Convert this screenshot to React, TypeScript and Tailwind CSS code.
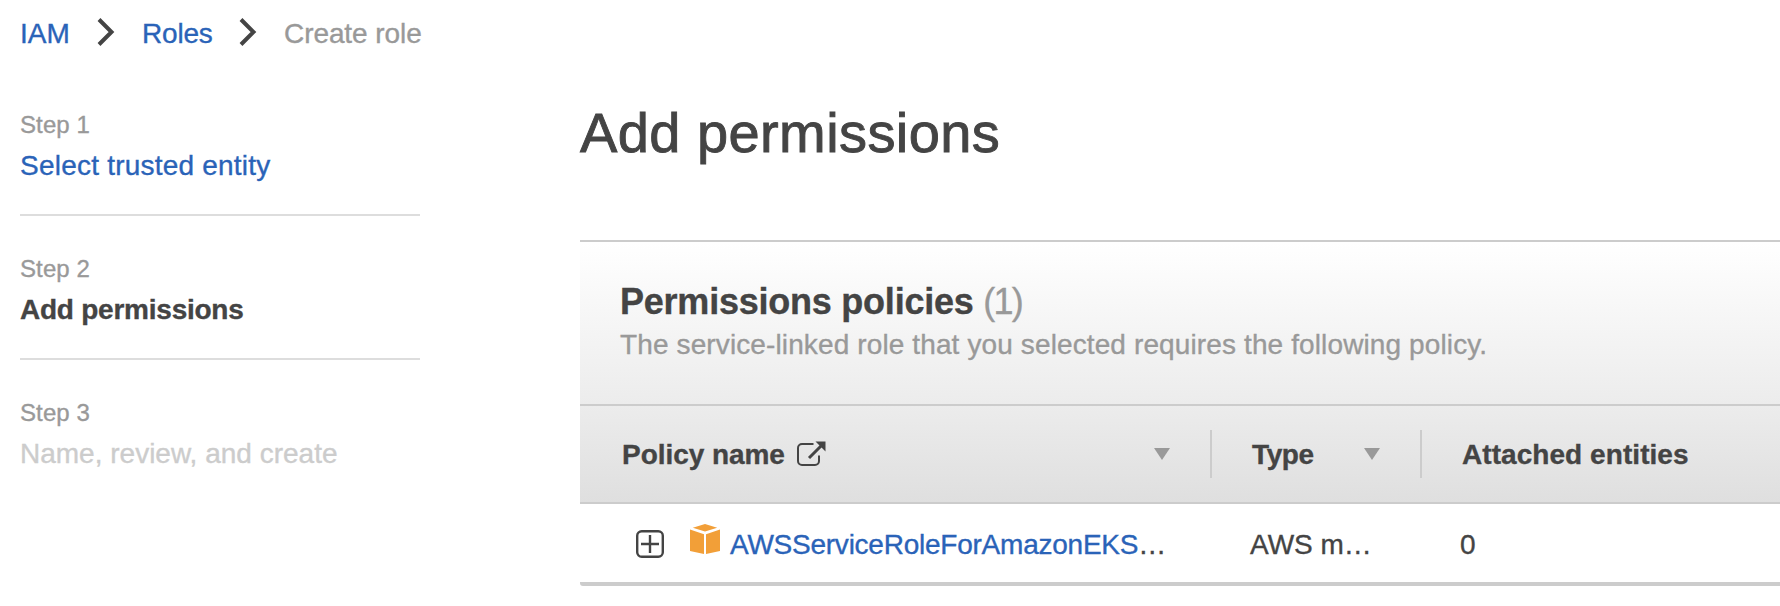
import React from "react";

const steps = [
  { step: "Step 1", label: "Select trusted entity", cls: "text-[#2a63b8] tracking-[0.22px]" },
  { step: "Step 2", label: "Add permissions", cls: "text-[#444] font-bold tracking-[-0.24px]" },
  { step: "Step 3", label: "Name, review, and create", cls: "text-[#ccc]" },
];

function Chevron() {
  return (
    <svg className="shrink-0" width="18" height="30" viewBox="0 0 18 30" fill="none" stroke="#444" strokeWidth="4">
      <path d="M2 2.5L14.5 15L2 27.5" />
    </svg>
  );
}

function SortArrow() {
  return (
    <svg className="shrink-0" width="16" height="12" viewBox="0 0 16 12" fill="#999">
      <path d="M0 0h16L8 12z" />
    </svg>
  );
}

function ExternalIcon() {
  return (
    <svg className="ml-[12px] shrink-0" width="29" height="26" viewBox="0 0 29 26" fill="none" stroke="#444" strokeWidth="2">
      <path d="M16.5 3H5a4 4 0 0 0-4 4v13a4 4 0 0 0 4 4h13a4 4 0 0 0 4-4v-5.5" />
      <path d="M12 17L25 4" strokeWidth="3" />
      <path d="M18.5 0.5H28.5V10.5z" fill="#444" stroke="none" />
    </svg>
  );
}

function ExpandIcon() {
  return (
    <svg className="mt-[2px] shrink-0" width="28" height="28" viewBox="0 0 28 28" fill="none" stroke="#444" strokeWidth="2.4">
      <rect x="1.2" y="1.2" width="25.6" height="25.6" rx="4.5" />
      <path d="M5 14h18M14 5v18" />
    </svg>
  );
}

function CubeIcon() {
  return (
    <svg className="mb-2 shrink-0" width="30" height="30" viewBox="0 0 30 30" fill="#f29f38">
      <path d="M2.8 3.8L15 0L27.2 3.8L15 7.6z" />
      <path d="M0 5.6L14 10.2V30L0 27z" />
      <path d="M30 5.6L16 10.2V30L30 27z" />
    </svg>
  );
}

export default function App() {
  return (
    <div className="h-[606px] w-[1780px] overflow-hidden bg-white font-['Liberation_Sans',Arial,sans-serif] text-[28px] leading-[40px] text-[#444] [-webkit-text-stroke:0.35px]">
      <nav className="flex h-[64px] items-center pl-5">
        <span className="w-[77px] pt-[3px] text-[#2a63b8]">IAM</span>
        <Chevron />
        <span className="ml-[27px] w-[97px] pt-[3px] tracking-[-0.2px] text-[#2a63b8]">Roles</span>
        <Chevron />
        <span className="ml-[27px] pt-[3px] tracking-[-0.08px] text-[#999]">Create role</span>
      </nav>
      <div className="flex">
        <aside className="ml-5 w-[400px] shrink-0 pt-[41px]">
          {steps.map((s, i) => (
            <div key={s.step} className={i < 2 ? "mb-[33px] h-[111px] border-b-2 border-[#ddd]" : ""}>
              <div className="text-[24px] tracking-[0.1px] text-[#999]">{s.step}</div>
              <div className={`mt-px ${s.cls}`}>{s.label}</div>
            </div>
          ))}
        </aside>
        <main className="ml-[160px] min-w-0 flex-1">
          <h1 className="h-[176px] pt-[39px] text-[56px] leading-[60px] tracking-[0.42px] [-webkit-text-stroke:0.9px]">
            Add permissions
          </h1>
          <section className="h-[166px] border-y-2 border-[#ccc] bg-linear-to-b from-white to-[#ececec] pt-10 pl-10">
            <h2 className="text-[36px] font-bold tracking-[-0.23px]">
              Permissions policies{" "}
              <span className="font-normal tracking-[-1.8px] text-[#999]">(1)</span>
            </h2>
            <p className="mt-[3px] whitespace-nowrap tracking-[0.12px] text-[#999]">
              The service-linked role that you selected requires the following policy.
            </p>
          </section>
          <div className="flex h-[98px] items-center border-b-2 border-[#ccc] bg-linear-to-b from-[#ececec] to-[#dfdfdf] font-bold">
            <div className="flex h-12 w-[632px] shrink-0 items-center border-r-2 border-[#ccc] pr-10 pl-[42px]">
              <span className="pt-[2px] tracking-[-0.05px]">Policy name</span>
              <ExternalIcon />
              <span className="ml-auto flex">
                <SortArrow />
              </span>
            </div>
            <div className="flex h-12 w-[210px] shrink-0 items-center justify-between border-r-2 border-[#ccc] px-10">
              <span className="pt-[2px] tracking-[-0.4px]">Type</span>
              <SortArrow />
            </div>
            <div className="pt-[2px] pl-10 tracking-[0.06px]">Attached entities</div>
          </div>
          <div className="flex h-[82px] items-center rounded-bl-[3px] border-b-4 border-[#ccc]">
            <div className="flex w-[670px] shrink-0 items-center pl-14">
              <ExpandIcon />
              <span className="ml-[26px] flex">
                <CubeIcon />
              </span>
              <span className="ml-[10px] pt-[3px] tracking-[-0.24px] whitespace-nowrap">
                <span className="text-[#2a63b8]">AWSServiceRoleForAmazonEKS</span>…
              </span>
            </div>
            <div className="w-[210px] shrink-0 pt-[3px]">AWS m…</div>
            <div className="pt-[3px]">0</div>
          </div>
        </main>
      </div>
    </div>
  );
}
